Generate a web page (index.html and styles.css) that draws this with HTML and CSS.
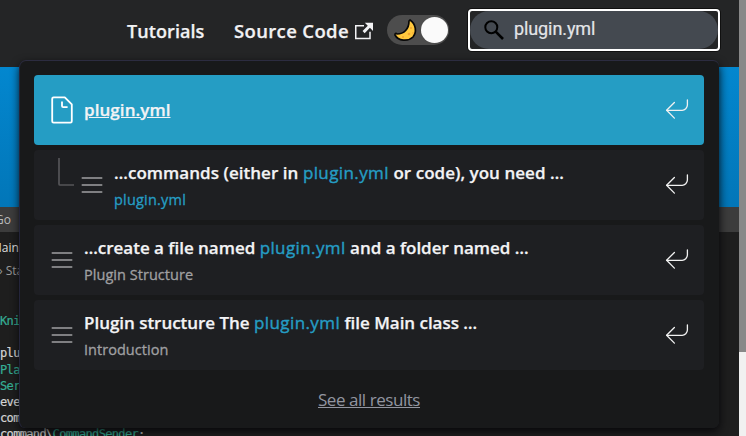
FILE: index.html
```html
<!DOCTYPE html>
<html lang="en">
<head>
<meta charset="utf-8">
<title>Tutorials</title>
<link rel="stylesheet" href="styles.css">
</head>
<body>
<svg class="defs" width="0" height="0" aria-hidden="true">
  <symbol id="enter" viewBox="0 0 20 20"><g fill="none" stroke="currentColor" stroke-width="1" stroke-linecap="round" stroke-linejoin="round"><path d="M18 3v4c0 2-2 4-4 4H2"/><path d="M8 17l-6-6 6-6"/></g></symbol>
  <symbol id="lines" viewBox="0 0 20 20"><path d="M17 5H3h14zm0 5H3h14zm0 5H3h14z" fill="none" stroke="currentColor" stroke-linejoin="round"/></symbol>
  <symbol id="page" viewBox="0 0 20 20"><path d="M17 6v12c0 .52-.2 1-1 1H4c-.7 0-1-.33-1-1V2c0-.55.42-1 1-1h8l5 5zM14 8h-3.13c-.51 0-.87-.34-.87-.87V4" fill="none" stroke="currentColor" stroke-width="1.3" stroke-linejoin="round"/></symbol>
</svg>
<div class="page">
  <header class="navbar">
    <a class="nav-link tutorials">Tutorials</a>
    <a class="nav-link source">Source Code</a>
    <svg class="external" width="18" height="18" viewBox="0 0 24 24"><path fill="currentColor" d="M21 13v10h-21v-19h12v2h-10v15h17v-8h2zm3-12h-10.988l4.035 4-6.977 7.07 2.828 2.828 6.977-7.07 4.125 4.172v-11z"/></svg>
    <div class="toggle">
      <svg class="moon" width="24" height="24" viewBox="0 0 24 24"><path d="M17 2C23 6 24 14 20 19C15 24 5 23 2 17C1.700 15.500 3 15 4 16C11 16 16 11 16 3Z" fill="#ffc83d" stroke="#080808" stroke-width="1.700" stroke-linejoin="round"/><g fill="#efa332"><circle cx="18" cy="10" r="1"/><circle cx="16" cy="16" r="1.300"/><circle cx="10" cy="19" r="1"/><circle cx="20" cy="15" r=".8"/></g></svg>
      <span class="knob"></span>
    </div>
    <label class="search">
      <span class="field">
        <svg width="22" height="22" viewBox="0 0 22 22" fill="none" stroke="#000" stroke-width="2"><circle cx="8.300" cy="8.300" r="6"/><path d="M12.700 12.700L20 20" stroke-width="2.600"/></svg>
        <span class="query">plugin.yml</span>
      </span>
    </label>
  </header>
  <div class="hero"></div>
  <div class="editor">
    <div class="menu">Go</div>
    <div class="tab">Main.</div>
    <div class="crumb">› Sta</div>
    <pre class="code"><b>Kni</b>

plu
<b>Pla</b>
<b>Ser</b>
eve
com
command\<b>CommandSender</b>;</pre>
  </div>
</div>
<div class="scrollbar"><div class="thumb"></div></div>
<div class="dropdown">
  <div class="hit active">
    <svg class="icon" width="28" height="28"><use href="#page"/></svg>
    <div class="copy"><div class="title t1">plugin.yml</div></div>
    <svg class="enter" width="26" height="26"><use href="#enter"/></svg>
  </div>
  <div class="hit">
    <svg class="tree" width="18" height="30" viewBox="0 0 18 30"><path d="M2 1v26q0 1 1 1h14" fill="none" stroke="currentColor" stroke-width="1.700"/></svg>
    <svg class="icon" width="28" height="28"><use href="#lines"/></svg>
    <div class="copy"><div class="title t2">…commands (either in <mark>plugin.yml</mark> or code), you need …</div><div class="sub s2">plugin.yml</div></div>
    <svg class="enter" width="26" height="26"><use href="#enter"/></svg>
  </div>
  <div class="hit">
    <svg class="icon" width="28" height="28"><use href="#lines"/></svg>
    <div class="copy"><div class="title t3">…create a file named <mark>plugin.yml</mark> and a folder named …</div><div class="sub s3">Plugin Structure</div></div>
    <svg class="enter" width="26" height="26"><use href="#enter"/></svg>
  </div>
  <div class="hit">
    <svg class="icon" width="28" height="28"><use href="#lines"/></svg>
    <div class="copy"><div class="title t4">Plugin structure The <mark>plugin.yml</mark> file Main class …</div><div class="sub s4">Introduction</div></div>
    <svg class="enter" width="26" height="26"><use href="#enter"/></svg>
  </div>
  <div class="footer"><a>See all results</a></div>
</div>
</body>
</html>
```
FILE: styles.css
```css
* { box-sizing: border-box; }
body { margin: 0; height: 436px; overflow: hidden; display: flex; background: #1e1e1e; color: #f2f2f4; font-family: "Open Sans", "Noto Sans", sans-serif; }
.defs { position: absolute; }
.page { width: 739px; height: 436px; overflow: hidden; }
.navbar { height: 67px; background: #242526; display: flex; padding-left: 127px; }
.nav-link { margin-top: 16px; height: 30px; line-height: 30px; font-size: 18px; font-weight: 600; white-space: nowrap; -webkit-text-stroke: .25px; }
.tutorials { width: 107px; letter-spacing: .08px; }
.source { width: 121px; font-size: 18.500px; letter-spacing: .35px; }
.external { margin-top: 22px; flex: none; }
.toggle { flex: none; margin: 15px 0 0 14px; width: 62px; height: 30px; border-radius: 15px; background: #4d4d4d; display: flex; align-items: center; justify-content: space-between; padding: 0 1px 0 6px; }
.knob { width: 27px; height: 26px; border-radius: 50%; background: #fafafa; box-shadow: 0 0 0 1px #4d4d4d; }
.search { flex: none; margin: 9px 0 0 19px; width: 252px; height: 42px; border-radius: 4px; border: 2px solid #fff; box-shadow: 0 0 0 1px #101010; }
.field { display: flex; align-items: center; width: 100%; height: 100%; border-radius: 19px; background: #444950; padding-left: 13px; }
.query { margin-left: 9px; font: 18px/38px Roboto, sans-serif; color: #e3e5e8; letter-spacing: -.1px; padding-bottom: 3px; -webkit-text-stroke: .2px; }
.hero { height: 140px; background: linear-gradient(#0387cf, #0276b8); }
.editor { height: 229px; background: #1e1e1e; color: #bbb; font-size: 12px; }
.menu { height: 25px; line-height: 25px; background: #3c3c3c; text-indent: -5px; }
.tab { height: 30px; line-height: 31px; text-indent: -9px; color: #ddd; }
.crumb { height: 23px; line-height: 18px; text-indent: -1px; color: #999; }
.code { margin: 28px 0 0; font: 12px/16.200px "DejaVu Sans Mono", monospace; letter-spacing: -.65px; color: #d4d4d4; -webkit-text-stroke: .2px; }
.code b { font-weight: 400; color: #35ad94; }
.scrollbar { width: 7px; background: #f1f1f1; }
.thumb { height: 352px; background: #888; }
.dropdown { position: absolute; left: 20px; top: 61px; width: 699px; height: 367px; border-radius: 6px; background: #18191a; padding: 14px 15px 0 14px; box-shadow: 0 -1px 0 #2c2c40, -1px 0 0 #24253a, 0 3px 10px #050508; display: flex; flex-direction: column; gap: 5px; }
.hit { height: 70px; flex: none; border-radius: 4px; background: #1e1f22; display: flex; align-items: center; padding: 0 14px 0 13.500px; color: #a0a0a2; }
.active { background: #259dc4; color: #fff; }
.icon { width: 28px; height: 28px; flex: none; margin-top: -1px; }
.copy { margin-left: 8.500px; flex: 1; min-width: 0; padding-top: 1px; }
.active .copy { padding-top: 0; }
.tree { margin: -26px 3px 0 9px; color: #555558; flex: none; }
.title { color: #f3f3f5; font-size: 17px; line-height: 24px; font-weight: 600; white-space: nowrap; letter-spacing: .04px; -webkit-text-stroke: .25px; }
.active .title { text-decoration: underline; letter-spacing: .07px; }
.t3 { letter-spacing: -.02px; }
.t4 { letter-spacing: -.03px; }
mark { background: none; color: #259dc4; font-weight: 400; letter-spacing: .4px; -webkit-text-stroke: .4px; }
.sub { margin-top: 4px; height: 22px; line-height: 22px; font-size: 14.500px; letter-spacing: .04px; -webkit-text-stroke: .3px; }
.s2 { color: #259dc4; letter-spacing: .2px; }
.enter { color: #f1f1f1; flex: none; margin-top: -3px; }
.footer { height: 56px; display: flex; justify-content: center; margin-top: 13px; color: #9295a0; }
.footer a { font-size: 17px; line-height: 24px; text-decoration: underline; letter-spacing: -.45px; }
```
